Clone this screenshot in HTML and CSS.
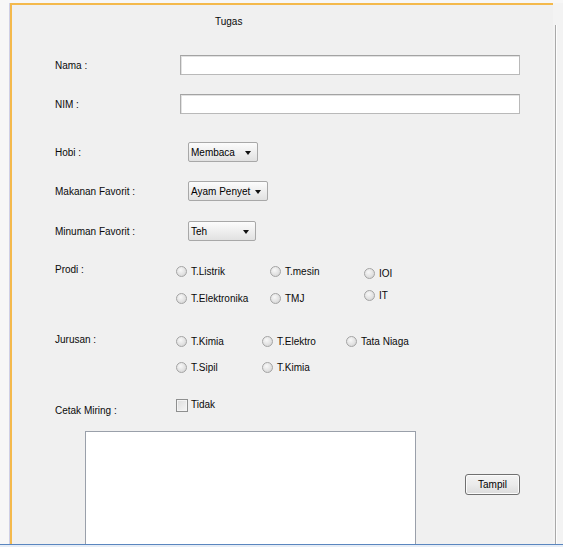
FILE: index.html
```html
<!DOCTYPE html>
<html>
<head>
<meta charset="utf-8">
<link rel="stylesheet" href="styles.css">
</head>
<body>
<div class="screen">
  <div class="frame">
    <div class="title">Tugas</div>

    <div class="row r-nama">
      <div class="label">Nama :</div>
      <div class="input"></div>
    </div>
    <div class="row r-nim">
      <div class="label">NIM :</div>
      <div class="input"></div>
    </div>

    <div class="row r-hobi">
      <div class="label">Hobi :</div>
      <div class="select w70"><span>Membaca</span><i class="arrow"></i></div>
    </div>
    <div class="row r-makan">
      <div class="label">Makanan Favorit :</div>
      <div class="select w80"><span>Ayam Penyet</span><i class="arrow"></i></div>
    </div>
    <div class="row r-minum">
      <div class="label">Minuman Favorit :</div>
      <div class="select w68"><span>Teh</span><i class="arrow"></i></div>
    </div>

    <div class="row top r-prodi">
      <div class="label lbl-radio">Prodi :</div>
      <div class="radios">
        <div class="rcol c94">
          <div class="radio"><i class="dot"></i>T.Listrik</div>
          <div class="radio"><i class="dot"></i>T.Elektronika</div>
        </div>
        <div class="rcol c94">
          <div class="radio"><i class="dot"></i>T.mesin</div>
          <div class="radio"><i class="dot"></i>TMJ</div>
        </div>
        <div class="rcol c3">
          <div class="radio"><i class="dot"></i>IOI</div>
          <div class="radio"><i class="dot"></i>IT</div>
        </div>
      </div>
    </div>

    <div class="row top r-jur">
      <div class="label lbl-radio">Jurusan :</div>
      <div class="radios">
        <div class="rcol j1">
          <div class="radio"><i class="dot"></i>T.Kimia</div>
          <div class="radio"><i class="dot"></i>T.Sipil</div>
        </div>
        <div class="rcol j2">
          <div class="radio"><i class="dot"></i>T.Elektro</div>
          <div class="radio"><i class="dot"></i>T.Kimia</div>
        </div>
        <div class="rcol">
          <div class="radio"><i class="dot"></i>Tata Niaga</div>
        </div>
      </div>
    </div>

    <div class="row top r-cetak">
      <div class="label lbl-cetak">Cetak Miring :</div>
      <div class="check"><i class="box"></i>Tidak</div>
    </div>

    <div class="bottom">
      <div class="textarea"></div>
      <div class="button">Tampil</div>
    </div>
  </div>
  <div class="side"><div class="sideline"></div></div>
</div>
<div class="taskbar"></div>
</body>
</html>
```

FILE: styles.css
```css
html, body {
  margin: 0;
  padding: 0;
}
body {
  width: 563px;
  height: 547px;
  overflow: hidden;
  background: #f7f7f7;
  font-family: "Liberation Sans", Arial, sans-serif;
  font-size: 10px;
  color: #0a0a0a;
}
.screen {
  display: flex;
  height: 544px;
  padding-top: 3px;
  box-sizing: border-box;
  padding-left: 9px;
}
.frame {
  width: 544px;
  height: 541px;
  box-sizing: border-box;
  border-left: 1px solid #cfd0e6;
  box-shadow: inset 2px 0 0 #f4b94c, inset 0 2px 0 #f4b94c;
  background: #f0f0f0;
  padding-left: 2px;
  padding-top: 2px;
  overflow: hidden;
}
.side {
  width: 10px;
  height: 541px;
  background: #f3f3f3;
}
.sideline {
  margin-left: 2px;
  margin-top: 22px;
  width: 1px;
  height: 519px;
  background: #a9a9a9;
  box-shadow: 1px 0 0 #fdfdfd;
}
.taskbar {
  height: 3px;
  border-top: 1px solid #5a86bf;
  background: #e6edf6;
  box-sizing: border-box;
}
.title {
  margin-top: 9px;
  height: 16px;
  line-height: 16px;
  padding-left: 203px;
}
.row {
  display: flex;
  align-items: center;
  padding-left: 43px;
}
.row.top {
  align-items: flex-start;
}
.label {
  width: 121px;
  flex: none;
}
.r-nama { margin-top: 25px; height: 20px; }
.r-nim { margin-top: 19px; height: 20px; }
.r-hobi { margin-top: 28px; height: 20px; }
.r-makan { margin-top: 19px; height: 20px; }
.r-minum { margin-top: 20px; height: 20px; }
.r-prodi { margin-top: 22px; }
.r-jur { margin-top: 27px; }
.r-cetak { margin-top: 21px; }

.input {
  margin-left: 4px;
  width: 340px;
  height: 20px;
  box-sizing: border-box;
  background: #fff;
  border: 1px solid #b9b9b9;
  border-top-color: #a3a3a3;
  border-left-color: #acacac;
  box-shadow: inset 1px 1px 0 #e2e2e2;
}
.select {
  margin-left: 12px;
  height: 20px;
  box-sizing: border-box;
  border: 1px solid #a8a8a8;
  border-radius: 2px;
  background: linear-gradient(#fcfcfc, #f0f0f0 45%, #e1e1e1);
  display: flex;
  align-items: center;
  justify-content: space-between;
  padding: 0 6px 0 2px;
  color: #000;
}
.w70 { width: 70px; }
.w80 { width: 80px; }
.w68 { width: 68px; }
.arrow {
  width: 0;
  height: 0;
  border-left: 3.5px solid transparent;
  border-right: 3.5px solid transparent;
  border-top: 4px solid #111;
  margin-top: 2px;
}
.lbl-radio {
  line-height: 16px;
  margin-top: -1px;
}
.radios {
  display: flex;
}
.rcol {
  display: flex;
  flex-direction: column;
  gap: 11px;
}
.c94 { width: 94px; }
.c3 { padding-top: 2px; gap: 6px; }
.r-jur .rcol { gap: 10px; }
.j1 { width: 86px; }
.j2 { width: 84px; }
.radio {
  height: 16px;
  display: flex;
  align-items: center;
  white-space: nowrap;
}
.dot {
  width: 11px;
  height: 11px;
  border-radius: 50%;
  box-sizing: border-box;
  border: 1px solid #a4a4a4;
  background: radial-gradient(circle at 40% 35%, #f8f8f8 0, #e2e2e2 55%, #cdcdcd 100%);
  margin-right: 4px;
  flex: none;
}
.lbl-cetak {
  padding-top: 7px;
  line-height: 16px;
}
.check {
  height: 16px;
  display: flex;
  align-items: center;
}
.box {
  width: 12px;
  height: 13px;
  box-sizing: border-box;
  border: 1px solid #8e8f8f;
  background: linear-gradient(135deg, #dcdcdc, #f6f6f6);
  box-shadow: inset 0 0 0 1px #f4f4f4;
  margin-right: 3px;
  margin-top: 3px;
}
.bottom {
  display: flex;
  align-items: flex-start;
  margin-top: 12px;
  padding-left: 73px;
}
.textarea {
  width: 331px;
  height: 130px;
  box-sizing: border-box;
  background: #fff;
  border: 1px solid #9aa0aa;
  border-bottom: none;
  flex: none;
}
.button {
  margin-left: 49px;
  margin-top: 43px;
  width: 55px;
  height: 21px;
  box-sizing: border-box;
  border: 1px solid #707070;
  border-radius: 3px;
  background: linear-gradient(#f3f3f3, #ebebeb 50%, #dcdcdc);
  box-shadow: inset 0 0 0 1px #fbfbfb;
  display: flex;
  align-items: center;
  justify-content: center;
  color: #000;
}
```
